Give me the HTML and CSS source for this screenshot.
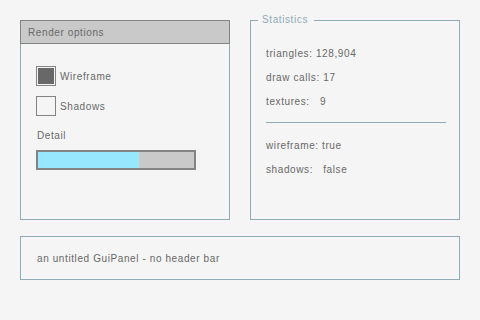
FILE: index.html
```html
<!DOCTYPE html>
<html lang="en">
<head>
  <meta charset="UTF-8">
  <title>Panels</title>
  <link rel="stylesheet" href="styles.css">
</head>
<body>

<div class="top-row">
  <!-- Panel with header -->
  <div class="panel">
    <div class="panel-header">Render options</div>
    <div class="panel-body">
      <div class="check-row">
        <span class="checkbox checked"><span class="check-fill"></span></span>
        <span class="check-label">Wireframe</span>
      </div>
      <div class="check-row">
        <span class="checkbox"></span>
        <span class="check-label">Shadows</span>
      </div>
      <div class="detail-label">Detail</div>
      <div class="progress">
        <div class="progress-fill" style="width: 65%;"></div>
      </div>
    </div>
  </div>

  <!-- Group box -->
  <fieldset class="groupbox">
    <legend>Statistics</legend>
    <div class="stats">
      <div class="stat">triangles: 128,904</div>
      <div class="stat">draw calls: 17</div>
      <div class="stat">textures:   9</div>
      <div class="separator"></div>
      <div class="stat">wireframe: true</div>
      <div class="stat">shadows:   false</div>
    </div>
  </fieldset>
</div>

<!-- Untitled panel -->
<div class="plain-panel">an untitled GuiPanel - no header bar</div>

</body>
</html>
```

FILE: styles.css
```css
* { margin: 0; padding: 0; box-sizing: border-box; }
body {
  font-family: 'Liberation Sans', Arial, sans-serif;
  font-size: 10px;
  letter-spacing: 0.6px;
  color: #686868;
  background: #f5f5f5;
  padding: 20px;
  width: 480px;
  height: 320px;
  overflow: hidden;
}

.top-row {
  display: flex;
  gap: 20px;
  height: 200px;
}

/* Panel with header bar */
.panel {
  width: 210px;
  display: flex;
  flex-direction: column;
}
.panel-header {
  height: 24px;
  background: #c9c9c9;
  border: 1px solid #838383;
  padding-left: 7px;
  display: flex;
  align-items: center;
}
.panel-body {
  flex: 1;
  border: 1px solid #90abb5;
  border-top: none;
  padding: 22px 15px 0;
}

.check-row {
  display: flex;
  align-items: center;
  gap: 4px;
  height: 20px;
  margin-bottom: 10px;
}
.checkbox {
  width: 20px;
  height: 20px;
  border: 1px solid #838383;
  padding: 1px;
  display: block;
}
.check-fill {
  display: block;
  width: 100%;
  height: 100%;
  background: #686868;
}

.detail-label {
  margin-top: 4px;
  height: 20px;
  line-height: 20px;
  padding-left: 1px;
}
.progress {
  margin-top: 4px;
  width: 160px;
  height: 20px;
  border: 2px solid #838383;
  background: #c9c9c9;
}
.progress-fill {
  height: 100%;
  background: #97e8ff;
}

/* Group box */
.groupbox {
  width: 210px;
  margin-top: -6px;
  border: 1px solid #90abb5;
  min-width: 0;
}
.groupbox legend {
  margin-left: 7px;
  padding: 0 6px 0 4px;
  color: #90abb5;
  line-height: 12px;
}
.stats {
  padding: 16px 13px 0 15px;
}
.stat {
  height: 24px;
  line-height: 24px;
  white-space: pre;
}
.separator {
  height: 1px;
  background: #90abb5;
  margin: 8px 0 11px;
}

/* Untitled panel */
.plain-panel {
  margin-top: 16px;
  height: 44px;
  border: 1px solid #90abb5;
  display: flex;
  align-items: center;
  padding-left: 16px;
}
```
